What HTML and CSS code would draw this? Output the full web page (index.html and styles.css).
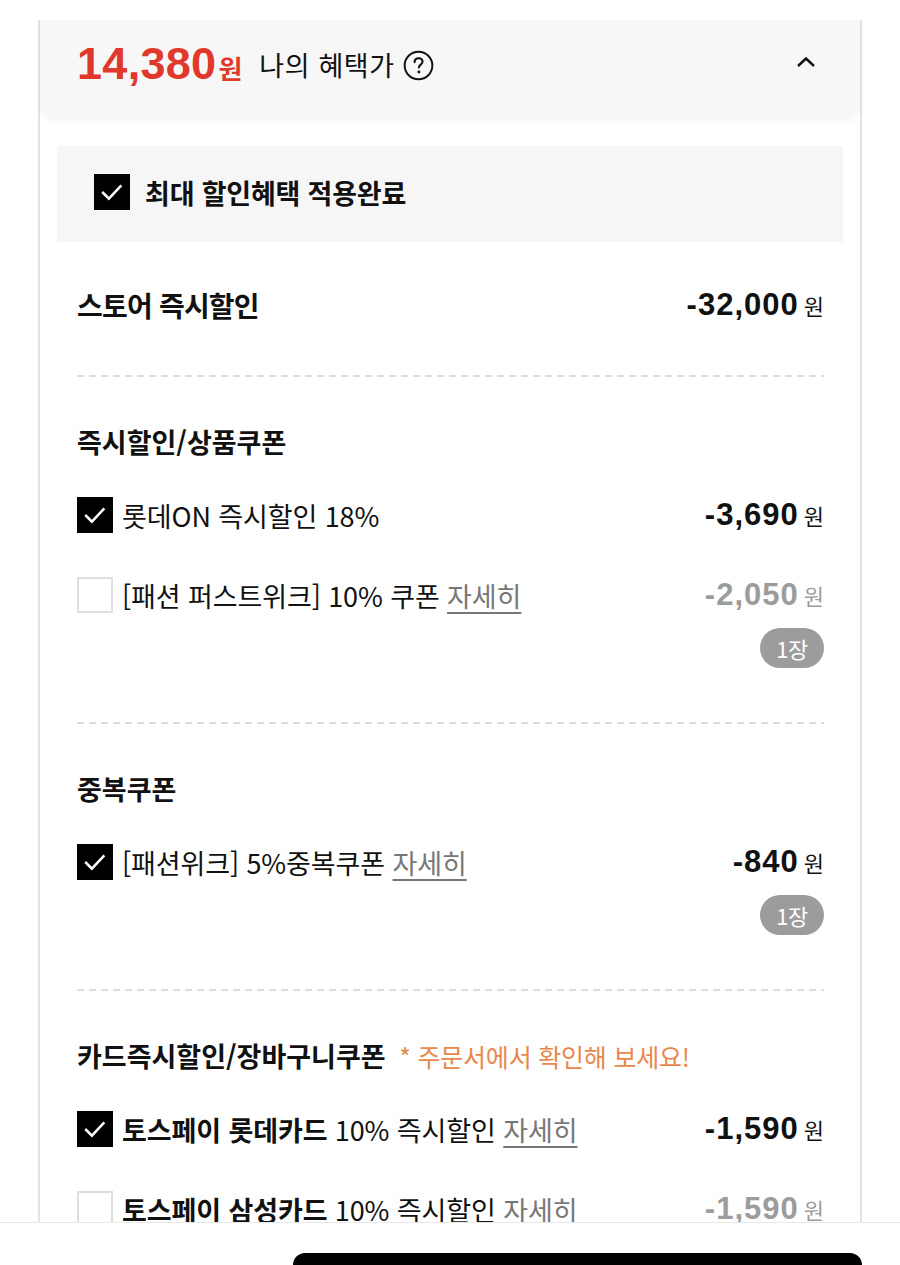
FILE: index.html
```html
<!DOCTYPE html>
<html lang="ko">
<head>
<meta charset="utf-8">
<title>나의 혜택가</title>
<link rel="stylesheet" href="styles.css">
</head>
<body>
<div class="panel">
  <div class="header">
    <div class="price"><span class="price-num">14,380</span><span class="price-won">원</span></div>
    <div class="price-label">나의 혜택가</div>
    <svg class="help" width="31" height="31" viewBox="0 0 30 30"><circle cx="15" cy="15" r="13.4" fill="none" stroke="#111" stroke-width="1.9"/><path d="M11.2 11.8c0-2.3 1.7-3.8 3.9-3.8s3.8 1.4 3.8 3.4c0 2.6-3.5 2.9-3.5 5.6" fill="none" stroke="#111" stroke-width="2" stroke-linecap="round"/><circle cx="15.4" cy="21.3" r="1.4" fill="#111"/></svg>
    <svg class="chev" width="20" height="12" viewBox="0 0 20 12"><path d="M2 10 10 2.5 18 10" fill="none" stroke="#111" stroke-width="2.4"/></svg>
  </div>

  <div class="applied">
    <span class="cb on"><svg viewBox="0 0 36 36"><path d="M7 18 14.5 25.5 28.5 10.5" fill="none" stroke="#fff" stroke-width="2.8"/></svg></span>
    <span class="applied-text">최대 할인혜택 적용완료</span>
  </div>

  <div class="content">
    <div class="section first">
      <div class="row">
        <div class="store-title">스토어 즉시할인</div>
        <div class="amt"><span class="num">-32,000</span><span class="won">원</span></div>
      </div>
    </div>
    <div class="dash"></div>

    <div class="section">
      <div class="sec-title">즉시할인/상품쿠폰</div>
      <div class="row item">
        <div class="left"><span class="cb on"><svg viewBox="0 0 36 36"><path d="M7 18 14.5 25.5 28.5 10.5" fill="none" stroke="#fff" stroke-width="2.8"/></svg></span><span class="label">롯데ON 즉시할인 18%</span></div>
        <div class="amt"><span class="num">-3,690</span><span class="won">원</span></div>
      </div>
      <div class="row item">
        <div class="left"><span class="cb"></span><span class="label">[패션 퍼스트위크] 10% 쿠폰 <span class="more">자세히</span></span></div>
        <div class="amt off"><span class="num">-2,050</span><span class="won">원</span></div>
      </div>
      <div class="badge-row"><span class="badge">1장</span></div>
    </div>
    <div class="dash"></div>

    <div class="section">
      <div class="sec-title">중복쿠폰</div>
      <div class="row item">
        <div class="left"><span class="cb on"><svg viewBox="0 0 36 36"><path d="M7 18 14.5 25.5 28.5 10.5" fill="none" stroke="#fff" stroke-width="2.8"/></svg></span><span class="label">[패션위크] 5%중복쿠폰 <span class="more">자세히</span></span></div>
        <div class="amt"><span class="num">-840</span><span class="won">원</span></div>
      </div>
      <div class="badge-row"><span class="badge">1장</span></div>
    </div>
    <div class="dash"></div>

    <div class="section">
      <div class="sec-title">카드즉시할인/장바구니쿠폰 <span class="note">* 주문서에서 확인해 보세요!</span></div>
      <div class="row item">
        <div class="left"><span class="cb on"><svg viewBox="0 0 36 36"><path d="M7 18 14.5 25.5 28.5 10.5" fill="none" stroke="#fff" stroke-width="2.8"/></svg></span><span class="label"><b>토스페이 롯데카드</b> 10% 즉시할인 <span class="more">자세히</span></span></div>
        <div class="amt"><span class="num">-1,590</span><span class="won">원</span></div>
      </div>
      <div class="row item">
        <div class="left"><span class="cb"></span><span class="label"><b>토스페이 삼성카드</b> 10% 즉시할인 <span class="more plain">자세히</span></span></div>
        <div class="amt off"><span class="num">-1,590</span><span class="won">원</span></div>
      </div>
    </div>
  </div>
</div>

<div class="bottom-bar">
  <div class="buy-btn"></div>
</div>
</body>
</html>
```

FILE: styles.css
```css
* { box-sizing: border-box; }
html, body { margin: 0; padding: 0; background: #fff; }
body {
  font-family: "Noto Sans CJK KR", "Noto Sans", sans-serif;
  color: #111;
  overflow: hidden;
  height: 1265px;
}

.panel {
  margin: 20px 0 0 38px;
  width: 824px;
  min-height: 1400px;
  border-left: 2px solid #e3e3e3;
  border-right: 2px solid #e3e3e3;
}

.header {
  height: 98px;
  background: #f7f7f7;
  border-radius: 0 0 14px 14px;
  box-shadow: 0 3px 6px rgba(0,0,0,0.04);
  display: flex;
  align-items: center;
  padding: 0 44px 10px 37px;
}
.price { color: #e0382b; font-weight: 700; display: flex; align-items: baseline; }
.price-num { font-family: "Liberation Sans", Arial, sans-serif; font-size: 45px; letter-spacing: 0.3px; }
.price-won { font-size: 26px; margin-left: 2px; }
.price-label { font-size: 27px; margin-left: 17px; letter-spacing: 0.6px; }
.help { margin-left: 8px; margin-top: 3px; }
.chev { margin-left: auto; margin-top: -4px; }

.applied {
  margin: 28px 17px 0 17px;
  height: 96px;
  background: #f6f6f6;
  display: flex;
  align-items: center;
  padding: 0 0 4px 37px;
}
.applied-text { font-size: 27px; font-weight: 700; margin-left: 15px; letter-spacing: -0.2px; }

.cb {
  width: 36px; height: 36px;
  flex: 0 0 36px;
  border: 2px solid #dedede;
  background: #fff;
  display: inline-block;
}
.cb.on { background: #000; border-color: #000; }
.cb svg { display: block; width: 32px; height: 32px; }

.content { padding: 0 36px 0 37px; }

.section { padding: 45px 0 54px; }
.section.first { padding: 43px 0 50px; }

.row { display: flex; align-items: center; justify-content: space-between; height: 40px; }
.item { margin-top: 33px; }
.item + .item { margin-top: 40px; }

.store-title { font-size: 28px; font-weight: 700; letter-spacing: -0.8px; }
.sec-title { font-size: 27px; font-weight: 700; height: 40px; line-height: 40px; letter-spacing: 0; white-space: nowrap; }
.note { color: #e8874c; font-weight: 400; font-size: 25px; margin-left: 6px; letter-spacing: -0.2px; }

.left { display: flex; align-items: center; }
.label { font-size: 27px; margin-left: 9px; letter-spacing: -0.1px; white-space: nowrap; }
.label b { font-weight: 700; }
.more { color: #777; text-decoration: underline; text-underline-offset: 5px; text-decoration-thickness: 1.5px; }
.more.plain { text-decoration: none; }

.amt { display: flex; align-items: baseline; }
.amt .num { font-family: "Liberation Sans", Arial, sans-serif; font-weight: 700; font-size: 31px; letter-spacing: 1px; }
.amt .won { font-size: 22px; margin-left: 5px; }
.amt.off { color: #9c9c9c; }

.badge-row { display: flex; justify-content: flex-end; margin-top: 13px; }
.badge {
  width: 64px; height: 40px;
  border-radius: 20px;
  background: #9c9c9c;
  color: #fff;
  font-size: 22px;
  display: flex; align-items: center; justify-content: center;
  letter-spacing: -0.5px;
}

.dash {
  height: 2px;
  background: repeating-linear-gradient(to right, #dcdcdc 0 7px, transparent 7px 12px);
}

.bottom-bar {
  position: fixed;
  left: 0; right: 0; top: 1222px; bottom: 0;
  background: #fff;
  border-top: 1px solid #e8e8e8;
}
.buy-btn {
  position: absolute;
  left: 293px; right: 38px; top: 30px; bottom: 0;
  background: #000;
  border-radius: 12px 12px 0 0;
}
```
